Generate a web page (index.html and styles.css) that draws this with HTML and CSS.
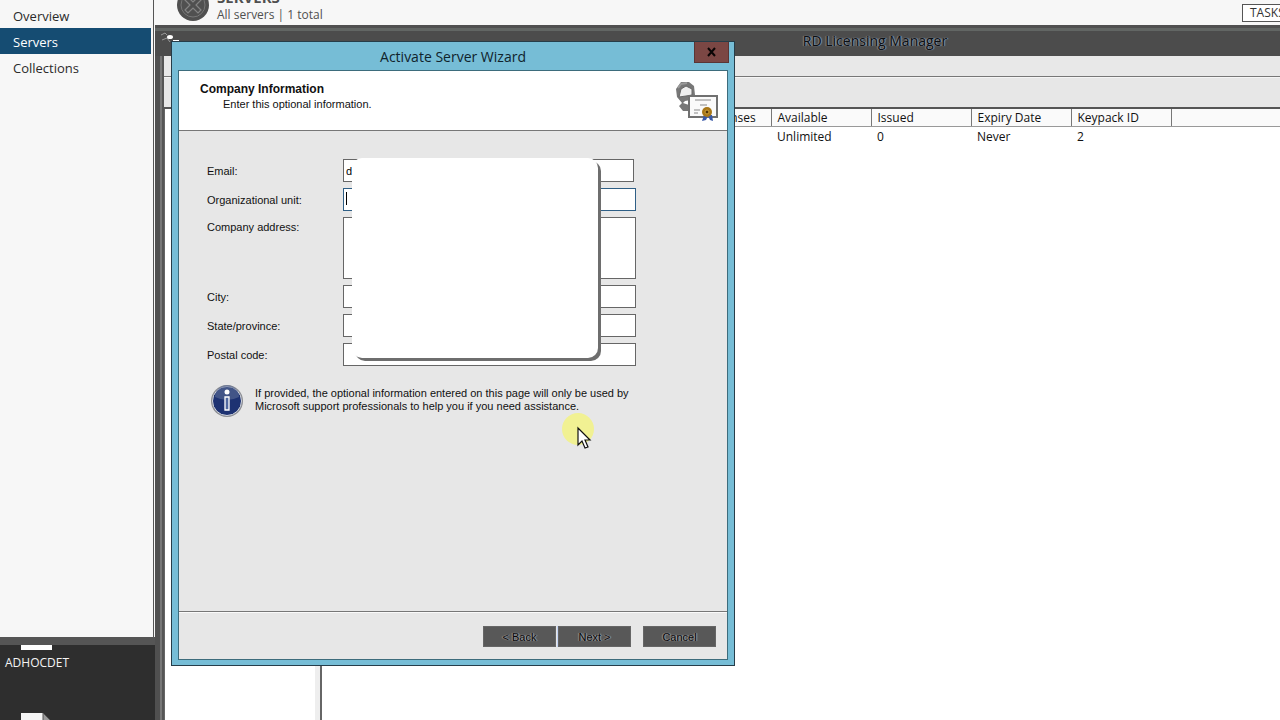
FILE: index.html
```html
<!DOCTYPE html>
<html lang="en">
<head>
    <meta charset="UTF-8" />
    <meta name="viewport" content="width=device-width, initial-scale=1" />
    <title>Activate Server Wizard</title>
    <link rel="stylesheet" href="styles.css">
</head>
<body>
    <div class="desktop">
        <div class="server-manager">
            <nav class="sidebar">
                <a href="#">Overview</a>
                <a href="#" class="active">Servers</a>
                <a href="#">Collections</a>
            </nav>
            <div class="servers-head">
                <svg class="servers-icon" viewBox="0 0 32 32" aria-hidden="true">
                    <circle cx="16" cy="16" r="16" fill="#505050" />
                    <circle cx="16" cy="16" r="12" fill="none" stroke="#777" stroke-width="1" />
                    <path d="M8 11l3-3 5 5 5-5 3 3-5 5 5 5-3 3-5-5-5 5-3-3 5-5z" fill="none" stroke="#858585" stroke-width="1.2" />
                </svg>
                <div class="servers-text">
                    <h2>SERVERS</h2>
                    <p>All servers | 1 total</p>
                </div>
                <button type="button" class="tasks">TASKS</button>
            </div>
        </div>

        <div class="shortcuts">
            <svg class="shortcut-icon" viewBox="0 0 32 7" aria-hidden="true"><path d="M0 0h31v5H0z" fill="#fff" /></svg>
            <span>ADHOCDET</span>
            <svg class="shortcut-file" viewBox="0 0 32 40" aria-hidden="true">
                <path d="M0 0h22l9 9v31H0z" fill="#f5f5f5" />
                <path d="M22 0v9h9z" fill="#999" stroke="#555" />
            </svg>
        </div>

        <section class="licensing">
            <div class="licensing-title">
                <svg class="licensing-icon" viewBox="0 0 20 12" aria-hidden="true">
                    <path d="M1 3l4-2 2 2M2 8l5-2 3 4" fill="none" stroke="#999" />
                    <ellipse cx="10" cy="5" rx="3" ry="2" fill="#fff" />
                    <path d="M13 9h6" stroke="#fff" stroke-width="2" />
                </svg>
                <h1>RD Licensing Manager</h1>
            </div>
            <div class="menubar"></div>
            <div class="toolbar"></div>
            <div class="panes">
                <div class="tree"></div>
                <div class="list">
                    <table>
                        <thead>
                            <tr>
                                <th class="wide"></th>
                                <th>Total Licenses</th>
                                <th>Available</th>
                                <th>Issued</th>
                                <th>Expiry Date</th>
                                <th>Keypack ID</th>
                                <th class="rest"></th>
                            </tr>
                        </thead>
                        <tbody>
                            <tr>
                                <td></td>
                                <td></td>
                                <td>Unlimited</td>
                                <td>0</td>
                                <td>Never</td>
                                <td>2</td>
                                <td></td>
                            </tr>
                        </tbody>
                    </table>
                </div>
            </div>
        </section>

        <section class="wizard">
            <div class="wizard-title">
                <h1>Activate Server Wizard</h1>
                <button type="button" class="close" aria-label="Close">
                    <svg viewBox="0 0 10 10" aria-hidden="true"><path d="M1 1l7 8M8 1L1 9" stroke="#0a0505" stroke-width="2" /></svg>
                </button>
            </div>
            <form class="wizard-page">
                <header class="page-head">
                    <div>
                        <h2>Company Information</h2>
                        <p>Enter this optional information.</p>
                    </div>
                    <svg class="cert-icon" viewBox="0 0 44 42" aria-hidden="true">
                        <path d="M6 1h8l5 4 1 9-4 5-6 1-2 2 6 2v6H8l-4-5 3-3-5-6-1-8z" fill="#777" />
                        <path d="M6 8l5-3 6 3v6l-6 1-7 1z" fill="#eee" stroke="#666" />
                        <path d="M3 7l3-4 6-1" fill="none" stroke="#999" stroke-width="2" />
                        <rect x="14" y="15" width="28" height="21" fill="#fafafa" stroke="#707070" stroke-width="2" />
                        <path d="M20 19h16M25 24h7M19 29h6M19 32h4" stroke="#888" />
                        <path d="M29 34l-2 6 4-1 2-4 2 4 3 1-1-6z" fill="#3858a8" />
                        <circle cx="32" cy="31" r="5" fill="#a87718" />
                        <circle cx="32" cy="31" r="2" fill="#4e3308" stroke="#d2a33a" />
                    </svg>
                </header>
                <div class="page-body">
                    <div class="fields">
                        <label for="email">Email:</label>
                        <input type="text" id="email" class="short" value="d" />
                        <label for="unit">Organizational unit:</label>
                        <div class="focus-field">
                            <input type="text" id="unit" class="focused" />
                            <span class="caret"></span>
                        </div>
                        <label for="address" class="top">Company address:</label>
                        <textarea id="address"></textarea>
                        <label for="city">City:</label>
                        <input type="text" id="city" />
                        <label for="state">State/province:</label>
                        <input type="text" id="state" />
                        <label for="postal">Postal code:</label>
                        <input type="text" id="postal" />
                        <div class="cover"></div>
                    </div>
                    <div class="note">
                        <svg class="info-icon" viewBox="0 0 34 34" aria-hidden="true">
                            <circle cx="17" cy="17" r="16" fill="#8b8d92" />
                            <circle cx="17" cy="17" r="14.5" fill="#1d3272" stroke="#d6d9e0" stroke-width="1" />
                            <path d="M5 13a12 12 0 0 1 24 0q-12 6-24 0z" fill="#5c6c96" opacity=".6" />
                            <circle cx="17" cy="8" r="2.5" fill="#fff" />
                            <path d="M15 13h4v13h-4z" fill="#5068a0" stroke="#fff" stroke-width="1.3" />
                        </svg>
                        <p>If provided, the optional information entered on this page will only be used by<br>Microsoft support professionals to help you if you need assistance.</p>
                    </div>
                </div>
                <footer class="page-foot">
                    <button type="button">&lt; Back</button>
                    <button type="button" class="next">Next &gt;</button>
                    <button type="button" class="cancel">Cancel</button>
                </footer>
            </form>
        </section>

        <div class="pointer">
            <svg viewBox="0 0 34 42" aria-hidden="true">
                <circle cx="17" cy="17" r="16" fill="#f1f193" />
                <path d="M17 16v17l4-4 3 7 3-1-3-7h5z" fill="#fff" stroke="#111" stroke-width="1.2" />
            </svg>
        </div>
    </div>
</body>
</html>
```

FILE: styles.css
```css
:root {
    --blue: #76bdd6;
    --face: #e7e7e7;
    --line: #666;
    --ui: "Open Sans", "Noto Sans", sans-serif;
    --dialog: "Liberation Sans", Arial, sans-serif;
}

* {
    box-sizing: border-box;
}

body {
    margin: 0;
    font-family: var(--ui);
    font-size: 12px;
    color: #111;
}

h1, h2, p {
    margin: 0;
    font-weight: normal;
}

button, input, textarea {
    font: inherit;
    margin: 0;
    border-radius: 0;
}

.desktop {
    position: relative;
    height: 100vh;
    overflow: hidden;
    background: #2e2e2e;
}

/* Server Manager */
.server-manager {
    display: flex;
    height: calc(100vh - 83px);
    background: #f7f7f7;
}

.sidebar {
    width: 154px;
    padding-top: 3px;
    padding-right: 2px;
    border-right: 1px solid #555;
    font-size: 13px;
}

.sidebar a {
    display: block;
    height: 26px;
    padding-left: 13px;
    line-height: 26px;
    color: #2b2b2b;
    text-decoration: none;
}

.sidebar .active {
    margin-top: -1px;
    margin-bottom: 1px;
    line-height: 28px;
    background: #154c72;
    color: #fff;
}

.servers-head {
    display: flex;
    flex: 1;
    height: 25px;
    padding-left: 23px;
}

.servers-icon {
    width: 32px;
    height: 32px;
    margin-top: -11px;
}

.servers-text {
    flex: 1;
    margin: -13px 0 0 8px;
    color: #505050;
}

.servers-text h2 {
    font-size: 15px;
    font-weight: bold;
    line-height: 20px;
}

.servers-text p {
    line-height: 16px;
}

.tasks {
    width: 38px;
    height: 18px;
    margin-top: 4px;
    padding: 0 0 0 7px;
    border: 1px solid #555;
    border-right: 0;
    background: #fff;
    color: #333;
    line-height: 16px;
    text-align: left;
    white-space: nowrap;
}

/* desktop icons */
.shortcuts {
    display: flex;
    flex-direction: column;
    width: 155px;
    border-top: 8px solid #555;
    color: #f4f4f4;
}

.shortcut-icon {
    width: 32px;
    height: 7px;
    margin-left: 21px;
}

.shortcuts span {
    margin: 1px 0 0 5px;
    line-height: 20px;
}

.shortcut-file {
    width: 32px;
    height: 40px;
    margin: 40px 0 0 21px;
}

/* RD Licensing Manager */
.licensing {
    position: absolute;
    top: 25px;
    left: 155px;
    right: 0;
    bottom: 0;
    display: flex;
    flex-direction: column;
    padding-left: 9px;
    background: linear-gradient(90deg, #505050 5px, #777 5px, #777 7px, #555 7px);
}

.licensing-title {
    display: flex;
    height: 31px;
    margin-left: -9px;
    padding: 7px 0 0 5px;
    background: linear-gradient(#505050 3px, #626664 3px, #626664 6px, #4c4c4c 6px);
}

.licensing-icon {
    width: 20px;
    height: 12px;
}

.licensing-title h1 {
    flex: 1;
    margin-left: 290px;
    font-size: 14px;
    line-height: 18px;
    text-align: center;
    color: #0c0f14;
    text-shadow: 1px 0 1px #8fa3b5, -1px 0 1px #888;
}

.menubar {
    height: 21px;
    background: #e8e8e8;
    border-bottom: 1px solid #777;
}

.toolbar {
    height: 32px;
    background: var(--face);
    border-top: 1px solid #f5f5f5;
    border-bottom: 2px solid #555;
}

.panes {
    display: flex;
    flex: 1;
    background: #fff;
}

.tree {
    width: 158px;
    border-left: 1px solid #666;
    border-right: 2px solid #666;
    box-shadow: inset -5px 0 0 #eee;
}

.list {
    flex: 1;
}

.list table {
    width: 100%;
    border-collapse: collapse;
    table-layout: fixed;
}

.list th,
.list td {
    width: 100px;
    padding: 0 0 0 6px;
    font-weight: normal;
    text-align: left;
    white-space: nowrap;
}

.list th {
    height: 17px;
    line-height: 17px;
    background: #fafafa;
    border-right: 1px solid #777;
    border-bottom: 1px solid #999;
}

.list td {
    height: 20px;
    line-height: 20px;
}

.list .wide {
    width: 349px;
}

.list .rest {
    width: auto;
    border-right: 0;
}

/* Activate Server Wizard */
.wizard {
    position: absolute;
    top: 41px;
    left: 171px;
    display: flex;
    flex-direction: column;
    width: 564px;
    height: 625px;
    padding: 0 6px 5px;
    border: 1px solid #263d49;
    background: var(--blue);
}

.wizard-title {
    display: flex;
    height: 28px;
}

.wizard-title h1 {
    flex: 1;
    padding-left: 34px;
    font-size: 14px;
    line-height: 29px;
    text-align: center;
    color: #10232c;
}

.close {
    display: flex;
    align-items: center;
    justify-content: center;
    width: 35px;
    height: 21px;
    margin-right: -1px;
    padding: 0;
    border: 1px solid #5a3535;
    border-top: 0;
    background: #7b4744;
}

.close svg {
    width: 10px;
    height: 10px;
}

.wizard-page {
    display: flex;
    flex: 1;
    flex-direction: column;
    border: 1px solid #3d6c7c;
    background: var(--face);
    font-family: var(--dialog);
    font-size: 11px;
}

.page-head {
    display: flex;
    justify-content: space-between;
    height: 60px;
    padding: 10px 8px 0 21px;
    background: #fff;
    border-bottom: 1px solid #777;
}

.page-head h2 {
    font-size: 12px;
    font-weight: bold;
    line-height: 16px;
}

.page-head p {
    padding-left: 23px;
    line-height: 14px;
}

.cert-icon {
    width: 44px;
    height: 42px;
}

.page-body {
    flex: 1;
    padding: 28px 28px 0;
}

.fields {
    position: relative;
    display: grid;
    grid-template-columns: 136px 293px;
    row-gap: 6px;
    align-items: center;
}

.fields .top {
    align-self: start;
    line-height: 20px;
}

.fields input,
.fields textarea {
    display: block;
    width: 100%;
    height: 23px;
    padding: 0 2px;
    border: 1px solid var(--line);
    background: #fff;
    outline: none;
}

.fields textarea {
    height: 62px;
    resize: none;
}

.fields .short {
    width: 291px;
}

.fields .focused {
    border-color: #2f5f86;
}

.focus-field {
    position: relative;
}

.caret {
    position: absolute;
    top: 4px;
    left: 3px;
    width: 1px;
    height: 13px;
    background: #000;
}

/* white panel over the fields */
.cover {
    position: absolute;
    top: -1px;
    left: 145px;
    width: 246px;
    height: 200px;
    border-radius: 10px;
    background: #fff;
    box-shadow: 3px 3px 0 #6e6e6e;
}

.note {
    display: flex;
    gap: 11px;
    margin-top: 18px;
    padding-left: 3px;
}

.info-icon {
    width: 34px;
    height: 34px;
}

.note p {
    padding-top: 3px;
    line-height: 13px;
}

.page-foot {
    display: flex;
    justify-content: flex-end;
    height: 48px;
    padding: 14px 11px 0;
    border-top: 1px solid #777;
    box-shadow: inset 0 1px 0 #fafafa;
}

.page-foot button {
    width: 73px;
    height: 21px;
    padding: 0;
    border: 1px solid #666;
    background: #585858;
    color: #08080c;
    text-shadow: 1px 0 1px #aaa, -1px 0 1px #999;
}

.page-foot .next {
    margin-left: 2px;
    box-shadow: -1px 0 0 #c3d3f4;
}

.page-foot .cancel {
    margin-left: 12px;
}

.pointer {
    position: absolute;
    top: 412px;
    left: 561px;
    width: 34px;
    height: 42px;
}
```
